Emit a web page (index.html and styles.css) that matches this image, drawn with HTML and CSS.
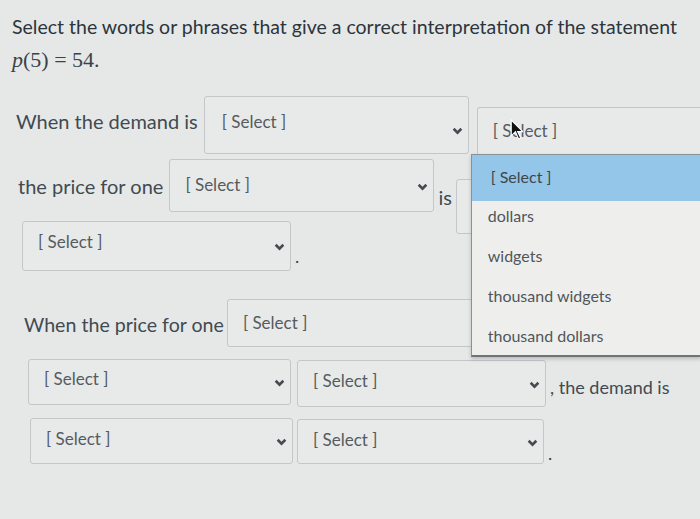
FILE: index.html
```html
<!DOCTYPE html>
<html lang="en">
<head>
  <meta charset="UTF-8">
  <meta name="viewport" content="width=device-width, initial-scale=1.0">
  <title>Quiz Question</title>
  <link rel="stylesheet" href="styles.css">
</head>
<body>

  <div class="question">
    <p class="prompt">Select the words or phrases that give a correct interpretation of the statement</p>
    <p class="math"><i>p</i>(5) = 54.</p>

    <!-- linha 1 -->
    <div class="row row-1">
      <span class="label">When the demand is</span>
      <div class="select sel-a">[ Select ]<svg class="chev" viewBox="0 0 10 7"><path d="M1.5 1.5l3.5 3.5 3.5-3.5"/></svg></div>
      <div class="select sel-open">
        [ Select ]
        <svg class="cursor" viewBox="0 0 12 20"><path d="M1 1v15l4-4 3 7 2-1-3-6h5z"/></svg>
        <ul class="dropdown">
          <li class="active">[ Select ]</li>
          <li>dollars</li>
          <li>widgets</li>
          <li>thousand widgets</li>
          <li>thousand dollars</li>
        </ul>
      </div>
    </div>

    <!-- linha 2 -->
    <div class="row row-2">
      <span class="label">the price for one</span>
      <div class="select sel-b">[ Select ]<svg class="chev" viewBox="0 0 10 7"><path d="M1.5 1.5l3.5 3.5 3.5-3.5"/></svg></div>
      <span class="word-is">is</span>
      <div class="select sel-hidden"></div>
    </div>

    <!-- linha 3 -->
    <div class="row row-3">
      <div class="select sel-c">[ Select ]<svg class="chev" viewBox="0 0 10 7"><path d="M1.5 1.5l3.5 3.5 3.5-3.5"/></svg></div>
      <span class="dot">.</span>
    </div>

    <!-- linha 4 -->
    <div class="row row-4">
      <span class="label">When the price for one</span>
      <div class="select sel-d">[ Select ]</div>
    </div>

    <!-- linha 5 -->
    <div class="row row-5">
      <div class="select sel-e">[ Select ]<svg class="chev" viewBox="0 0 10 7"><path d="M1.5 1.5l3.5 3.5 3.5-3.5"/></svg></div>
      <div class="select sel-f">[ Select ]<svg class="chev" viewBox="0 0 10 7"><path d="M1.5 1.5l3.5 3.5 3.5-3.5"/></svg></div>
      <span class="label tail">, the demand is</span>
    </div>

    <!-- linha 6 -->
    <div class="row row-6">
      <div class="select sel-e">[ Select ]<svg class="chev" viewBox="0 0 10 7"><path d="M1.5 1.5l3.5 3.5 3.5-3.5"/></svg></div>
      <div class="select sel-g">[ Select ]<svg class="chev" viewBox="0 0 10 7"><path d="M1.5 1.5l3.5 3.5 3.5-3.5"/></svg></div>
      <span class="dot">.</span>
    </div>
  </div>

</body>
</html>
```

FILE: styles.css
```css
/* pergunta do quiz */
body {
  font-family: Lato, "Open Sans", sans-serif;
  margin: 0;
  padding: 0;
  background-color: #e6e8e7;
  color: #3a4249;
  overflow: hidden;
  height: 519px;
}

.question {
  position: relative;
  padding: 14px 0 0 12px;
}

.prompt {
  margin: 0;
  font-size: 19.5px;
  line-height: 26px;
  color: #2c353d;
}

.math {
  margin: 6px 0 0;
  font-family: "Liberation Serif", serif;
  font-size: 22px;
  line-height: 28px;
  color: #3a4249;
}

.row {
  display: flex;
  align-items: flex-start;
}

.label {
  font-size: 20px;
  color: #414a51;
  white-space: nowrap;
}

.select {
  position: relative;
  display: flex;
  align-items: flex-start;
  box-sizing: border-box;
  padding-left: 15px;
  border: 1px solid #c3c7c9;
  border-radius: 3px;
  background-color: #e8eaea;
  font-size: 17px;
  line-height: 20px;
  color: #555b60;
  flex-shrink: 0;
}

.chev {
  position: absolute;
  right: 5px;
  top: 50%;
  width: 11px;
  height: 8px;
  margin-top: -3px;
  fill: none;
  stroke: #464b50;
  stroke-width: 2.4;
}

.row-1 {
  margin-top: 22px;
  padding-left: 4px;
}

.row-1 .label {
  margin-top: 13px;
}

.sel-a {
  width: 265px;
  height: 58px;
  margin-left: 6px;
  padding: 15px 0 0 17px;
}

.sel-a .chev {
  top: 33px;
}

/* a caixa aberta sai pela borda direita da tela */
.sel-open {
  width: 223px;
  height: 52px;
  margin-left: 8px;
  margin-top: 11px;
  padding-top: 13px;
  border-right: none;
  border-radius: 3px 0 0 3px;
}

.cursor {
  position: absolute;
  left: 32px;
  top: 11px;
  width: 13px;
  height: 21px;
  fill: #111;
  stroke: #fff;
  stroke-width: 1;
  z-index: 3;
}

.dropdown {
  position: absolute;
  left: -7px;
  top: 46px;
  width: 230px;
  box-sizing: border-box;
  margin: 0;
  padding: 0;
  list-style: none;
  background-color: #eeefed;
  border: 1px solid #8c9194;
  border-right: none;
  border-bottom: 2px solid #6f7377;
  box-shadow: 0 2px 4px rgba(0, 0, 0, 0.2);
  z-index: 2;
}

.dropdown li {
  padding: 0 16px;
  height: 40px;
  line-height: 30px;
  font-size: 16px;
  color: #50565b;
}

.dropdown li.active {
  height: 46px;
  line-height: 44px;
  padding-left: 19px;
  background-color: #93c6e8;
  color: #3d464d;
}

.dropdown li:last-child {
  height: 34px;
}

.row-2 {
  padding-left: 6px;
}

.row-2 .label {
  margin-top: 15px;
}

.sel-b {
  width: 265px;
  height: 53px;
  margin-left: 6px;
  padding-top: 15px;
}

.word-is {
  font-size: 20px;
  color: #414a51;
  margin: 26px 0 0 4px;
}

.sel-hidden {
  width: 40px;
  height: 55px;
  margin: 20px 0 0 4px;
}

.row-3 {
  margin-top: -13px;
  padding-left: 10px;
}

.sel-c {
  width: 269px;
  height: 50px;
  padding-top: 10px;
}

.dot {
  font-size: 18px;
  margin: 24px 0 0 4px;
}

.row-4 {
  margin-top: 28px;
  padding-left: 12px;
}

.row-4 .label {
  margin-top: 14px;
  font-size: 19.6px;
}

.sel-d {
  width: 252px;
  height: 48px;
  margin-left: 3px;
  padding-top: 13px;
}

.row-5 {
  margin-top: 12px;
  padding-left: 16px;
}

.sel-e {
  width: 263px;
  height: 46px;
  padding-top: 9px;
}

.sel-f {
  width: 249px;
  height: 47px;
  margin: 1px 0 0 6px;
  padding-top: 10px;
}

.tail {
  font-size: 18px;
  margin: 17px 0 0 4px;
}

.row-6 {
  margin-top: 11px;
  padding-left: 18px;
}

.row-6 .sel-e {
  padding-top: 10px;
}

.sel-g {
  width: 247px;
  height: 45px;
  margin: 1px 0 0 4px;
  padding-top: 10px;
}
```
